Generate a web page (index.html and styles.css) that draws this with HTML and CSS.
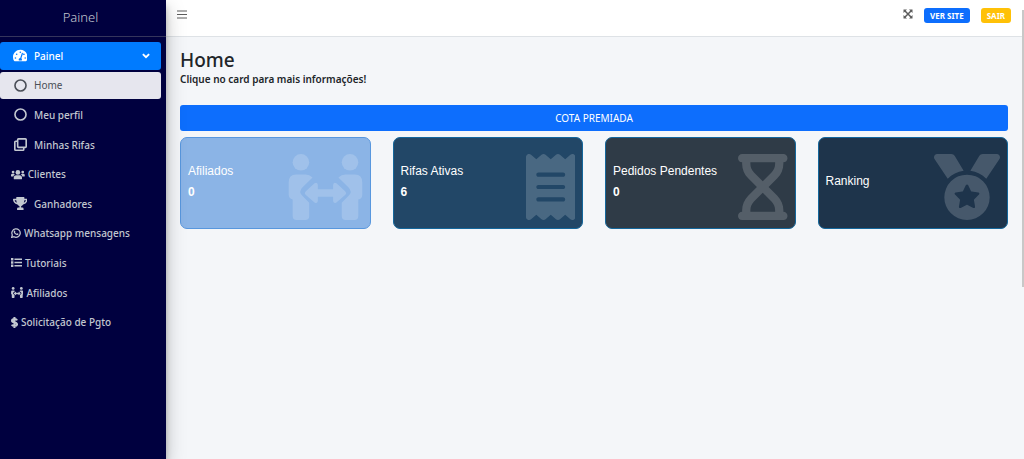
FILE: index.html
```html
<!DOCTYPE html>
<html lang="pt-BR">
<head>
<meta charset="utf-8">
<meta name="viewport" content="width=device-width, initial-scale=1">
<title>Painel</title>
<link rel="stylesheet" href="styles.css">
</head>
<body>
<div class="layout">
  <aside class="sidebar">
    <a class="brand" href="#">Painel</a>
    <nav class="menu" aria-label="Principal">
      <a class="item active" href="#">
        <span class="slot"><svg class="icon" viewBox="0 0 576 512"><path fill-rule="evenodd" d="M288 32C129 32 0 161 0 320c0 53 14 102 39 145 6 9 16 15 27 15h444c11 0 21-6 27-15 25-43 39-92 39-145C576 161 447 32 288 32zM288 96a32 32 0 1 1 0 64 32 32 0 1 1 0-64zM96 384a32 32 0 1 1 0-64 32 32 0 1 1 0 64zM144 240a32 32 0 1 1 0-64 32 32 0 1 1 0 64zM343 386c6 9 9 20 9 30 0 12-3 23-9 32H233c-6-9-9-20-9-32 0-34 27-62 61-64l61-184c4-13 18-20 30-15 13 4 20 18 15 30l-61 184zM402 224a32 32 0 1 1 28 16c-10 0-18-4-24-9zM480 384a32 32 0 1 1 0-64 32 32 0 1 1 0 64z"/></svg></span>
        Painel
        <svg class="chevron" viewBox="0 0 16 16"><path d="M3 5l5 5 5-5"/></svg>
      </a>
      <a class="item current" href="#"><span class="slot"><svg class="icon line" viewBox="0 0 16 16"><circle cx="8" cy="8" r="6.8"/></svg></span>Home</a>
      <a class="item" href="#"><span class="slot"><svg class="icon line" viewBox="0 0 16 16"><circle cx="8" cy="8" r="6.8"/></svg></span>Meu perfil</a>
      <a class="item" href="#"><span class="slot"><svg class="icon line" viewBox="0 0 16 16"><rect x="4.5" y="1" width="10.5" height="10.5" rx="1"/><path d="M4 4H2Q1 4 1 5v9q0 1 1 1h9q1 0 1-1v-2"/></svg></span>Minhas Rifas</a>
      <a class="item flush" href="#"><svg class="icon" viewBox="0 0 20 16"><circle cx="10" cy="5" r="3.4"/><circle cx="3" cy="4.5" r="2"/><circle cx="17" cy="4.5" r="2"/><path d="M4 14v-1.500q0-3.500 3.500-3.500h5q3.500 0 3.500 3.500V14q0 1-1 1H5q-1 0-1-1zM0 10V9q0-2 2-2h2q1 0 1.700.6Q3.800 8.800 3.500 11H1q-1 0-1-1zM20 10V9q0-2-2-2h-2q-1 0-1.700.6 1.900 1.200 2.200 3.400H19q1 0 1-1z"/></svg>Clientes</a>
      <a class="item" href="#"><span class="slot"><svg class="icon" viewBox="0 0 18 16"><path fill-rule="evenodd" d="M4.500 0h9q.5 0 .5.500V2h3.300q.7 0 .7.700 0 5-5.500 6.600-1 1.500-2.500 2V13h1.500q1.500 0 1.500 1.500V16H5v-1.500Q5 13 6.500 13H8v-1.700q-1.500-.5-2.500-2Q0 7.700 0 2.700 0 2 .7 2H4V.5q0-.5.500-.5zM2 4q.5 2 2.700 3Q4.200 5.800 4 4zM16 4h-2q-.2 1.800-.7 3Q15.500 6 16 4z"/></svg></span>Ganhadores</a>
      <a class="item flush" href="#"><svg class="icon small" viewBox="0 0 16 16"><path class="stroke" d="M1 15l1.100-3.800A6.700 6.700 0 1 1 4.800 14z"/><path d="M5.400 4q.7-.3 1 .3l.6 1.400q.1.400-.6 1.100 1 1.900 2.700 2.500.8-1 1-.9l1.600.8q.5.300.1 1.100-.8 1.400-2.600 1-3.800-1-5-4.500Q4 5 5.400 4z"/></svg>Whatsapp mensagens</a>
      <a class="item flush" href="#"><svg class="icon" viewBox="0 0 16 16"><path d="M0 1.500h3.500V5H0zM0 6.250h3.500v3.500H0zM0 11h3.500v3.500H0zM5 2.200h11v2.200H5zM5 6.900h11v2.200H5zM5 11.600h11v2.200H5z"/></svg>Tutoriais</a>
      <a class="item flush" href="#"><svg class="icon" viewBox="0 0 224 199"><use href="#people"/></svg>Afiliados</a>
      <a class="item flush" href="#"><svg class="icon" viewBox="0 0 10 16"><path class="stroke dollar" d="M5 0v16M8.800 4.800Q8 3 5.200 3 1.500 3 1.500 5.300q0 1.700 3.500 2.500 3.800.8 3.800 2.900Q8.800 13 5 13 2 13 1.200 11"/></svg>Solicitação de Pgto</a>
    </nav>
  </aside>

  <div class="page">
    <header class="topbar">
      <button class="icon-button" type="button" aria-label="Abrir menu"><svg class="burger" viewBox="0 0 10 9"><path d="M0 1h10M0 4.500h10M0 8h10"/></svg></button>
      <div class="actions">
        <button class="icon-button" type="button" aria-label="Tela cheia"><svg class="expand" viewBox="0 0 20 20"><path class="cross" d="M3 3l14 14M17 3L3 17"/><path d="M1 1h7L1 8zM19 1h-7l7 7zM1 19h7l-7-7zM19 19h-7l7-7z"/></svg></button>
        <a class="tag primary" href="#">VER SITE</a>
        <a class="tag warning" href="#">SAIR</a>
      </div>
    </header>

    <main class="content">
      <h1>Home</h1>
      <p class="hint">Clique no card para mais informações!</p>
      <button class="banner" type="button">COTA PREMIADA</button>
      <div class="cards">
        <a class="card affiliates" href="#">
          <span class="text">Afiliados<strong>0</strong></span>
          <svg class="art" viewBox="0 0 224 199"><g id="people"><circle cx="39" cy="25" r="25"/><circle cx="187" cy="25" r="25"/><path d="M24 62h29q12 0 21 9L44 100q-14 13 0 27l20 20v40q0 12-12 12H26q-12 0-12-12v-50Q2 134 2 121V86q0-24 22-24zM202 62h-29q-12 0-21 9l30 29q14 13 0 27l-20 20v40q0 12 12 12h26q12 0 12-12v-50q12-2 12-15V86q0-24-22-24z"/><path d="M53 113l27-25q8-5 10 5v13h46V93q2-10 10-5l27 25q5 5 0 10l-27 23q-8 5-10-4v-13H90v13q-2 9-10 4l-27-23q-5-5 0-10z"/></g></svg>
        </a>
        <a class="card active-raffles" href="#">
          <span class="text">Rifas Ativas<strong>6</strong></span>
          <svg class="art" viewBox="0 0 384 512"><path d="M14 2.200C22.500-1.700 32.500-.3 39.600 5.800L80 40.400 120.400 5.800c9-7.700 22.300-7.700 31.200 0L192 40.400 232.400 5.800c9-7.700 22.200-7.700 31.200 0L304 40.400 344.400 5.800c7.100-6.100 17.100-7.500 25.600-3.600s14 12.400 14 21.800V488c0 9.400-5.500 17.900-14 21.800s-18.500 2.500-25.600-3.600L304 471.600l-40.400 34.600c-9 7.700-22.200 7.700-31.200 0L192 471.600l-40.400 34.600c-9 7.700-22.300 7.700-31.200 0L80 471.600 39.600 506.200c-7.100 6.100-17.100 7.500-25.600 3.600S0 497.400 0 488V24C0 14.600 5.500 6.100 14 2.200zM96 144c-8.800 0-16 7.200-16 16s7.200 16 16 16H288c8.800 0 16-7.200 16-16s-7.200-16-16-16H96zM80 352c0 8.800 7.200 16 16 16H288c8.800 0 16-7.200 16-16s-7.200-16-16-16H96c-8.800 0-16 7.200-16 16zM96 240c-8.800 0-16 7.200-16 16s7.200 16 16 16H288c8.800 0 16-7.200 16-16s-7.200-16-16-16H96z"/></svg>
        </a>
        <a class="card pending" href="#">
          <span class="text">Pedidos Pendentes<strong>0</strong></span>
          <svg class="art" viewBox="0 0 384 512"><path d="M0 32C0 14.300 14.300 0 32 0H64 320h32c17.700 0 32 14.300 32 32s-14.300 32-32 32V75c0 42.400-16.900 83.100-46.900 113.100L237.300 256l67.900 67.900c30 30 46.900 70.700 46.900 113.100v11c17.700 0 32 14.300 32 32s-14.300 32-32 32H320 64 32c-17.700 0-32-14.300-32-32s14.300-32 32-32V437c0-42.400 16.900-83.100 46.900-113.100L146.700 256 78.900 188.100C48.900 158.100 32 117.400 32 75V64C14.300 64 0 49.700 0 32zM96 64V75c0 25.500 10.100 49.900 28.100 67.900L192 210.700l67.900-67.900c18-18 28.100-42.400 28.100-67.900V64H96zm0 384H288V437c0-25.500-10.100-49.900-28.100-67.900L192 301.300l-67.900 67.900c-18 18-28.100 42.400-28.100 67.900v11z"/></svg>
        </a>
        <a class="card ranking" href="#">
          <span class="text">Ranking</span>
          <svg class="art" viewBox="0 0 512 512"><path d="M4.100 38.200C1.400 34.200 0 29.400 0 24.600C0 11 11 0 24.600 0H133.900c11.200 0 21.700 5.900 27.400 15.500l68.500 114.100c-48.200 6.100-91.300 28.600-123.400 61.900L4.100 38.200zm503.700 0L405.600 191.500c-32.100-33.300-75.200-55.800-123.400-61.900L350.700 15.500C356.500 5.900 366.900 0 378.100 0H487.400C501 0 512 11 512 24.600c0 4.800-1.400 9.600-4.100 13.600zM80 336a176 176 0 1 1 352 0A176 176 0 1 1 80 336zm184.400-94.900c-3.400-7-13.300-7-16.800 0l-22.400 45.400c-1.400 2.800-4 4.700-7 5.100L168 298.900c-7.700 1.100-10.700 10.500-5.200 16l36.300 35.400c2.200 2.200 3.200 5.200 2.700 8.300l-8.600 49.900c-1.300 7.600 6.700 13.500 13.600 9.900l44.800-23.600c2.700-1.400 6-1.400 8.700 0l44.800 23.600c6.900 3.600 14.900-2.200 13.600-9.900l-8.600-49.900c-.5-3 .5-6.100 2.700-8.300l36.300-35.400c5.600-5.400 2.500-14.800-5.200-16l-50.100-7.300c-3-.4-5.700-2.400-7-5.100l-22.400-45.400z"/></svg>
        </a>
      </div>
    </main>
  </div>
</div>
<div class="scroll-thumb"></div>
</body>
</html>
```
FILE: styles.css
```css
* { box-sizing: border-box; }
body {
  margin: 0;
  background: #f4f6f9;
  color: #212529;
  font-family: "Noto Sans", "Open Sans", sans-serif;
  font-size: 10px;
}
a { color: inherit; text-decoration: none; }
button { border: 0; font: inherit; cursor: pointer; }
svg { display: block; flex: none; fill: currentColor; }

.layout { display: flex; min-height: 100vh; }

.sidebar {
  position: relative;
  z-index: 1;
  flex: 0 0 166px;
  background: #00003f;
  color: #c2c7d0;
  box-shadow: 0 8px 18px rgba(0, 0, 0, .25), 0 6px 6px rgba(0, 0, 0, .2);
}
.brand {
  display: block;
  height: 37px;
  padding-right: 5px;
  border-bottom: 1px solid #35355c;
  font-size: 13px;
  font-weight: 300;
  line-height: 35px;
  text-align: center;
}
.menu {
  display: grid;
  grid-auto-rows: 1fr;
  gap: 2px;
  min-height: 294px;
  padding-right: 5px;
  margin-top: 5px;
  font-weight: 500;
}
.item {
  display: flex;
  align-items: center;
  padding: 0 10px;
  border-radius: 3px;
}
.item.active { background: #007bff; color: #fff; }
.item.current { background: #e6e6ee; color: #4b4f58; font-weight: 400; }
.slot { display: flex; justify-content: center; width: 20px; margin-right: 4px; }
.icon { height: 13px; }
.flush { gap: 3px; padding-left: 11px; }
.flush .icon { height: 11px; }
.flush .small { height: 10px; }
.line, .stroke { fill: none; stroke: currentColor; stroke-width: 2; }
.stroke.dollar { stroke-width: 3; }
.chevron { width: 10px; margin-left: auto; fill: none; stroke: currentColor; stroke-width: 3; }

.page { flex: 1; min-width: 0; }
.topbar {
  display: flex;
  justify-content: space-between;
  height: 37px;
  padding: 6px 13px 0 11px;
  border-bottom: 1px solid #dee2e6;
  background: #fff;
}
.actions { display: flex; gap: 11px; }
.icon-button {
  display: flex;
  align-items: center;
  height: 16px;
  padding: 0;
  background: none;
  color: #5c5c5c;
}
.burger { width: 10px; stroke: currentColor; stroke-width: 1; }
.expand { width: 10px; }
.cross { fill: none; stroke: currentColor; stroke-width: 3; }
.tag {
  height: 15px;
  margin-top: 2px;
  padding: 0 6px;
  border-radius: 3px;
  color: #fff;
  font-size: 8px;
  font-weight: 700;
  line-height: 15px;
}
.primary { background: #0d6efd; }
.warning { background: #ffc107; }

.content { padding: 11px 16px 16px 14px; }
h1 { margin: 0; font-size: 19px; font-weight: 500; line-height: 24px; }
.hint { margin: 0; font-weight: 600; line-height: 14px; }
.banner {
  display: block;
  width: 100%;
  height: 26px;
  margin: 19px 0 6px;
  border-radius: 3px;
  background: #0d6efd;
  color: #fff;
}
.cards { display: grid; grid-template-columns: repeat(4, 1fr); gap: 22px; }
.card {
  display: flex;
  align-items: center;
  justify-content: space-between;
  min-height: 92px;
  padding: 8px 7px 0;
  border: 1px solid #14679c;
  border-radius: 7px;
  color: #fff;
  font-family: "Liberation Sans", sans-serif;
  font-size: 12px;
}
.text { padding-bottom: 11px; line-height: 21px; white-space: nowrap; }
.text strong { display: block; }
.art { height: 66px; fill: rgba(255, 255, 255, .18); }
.affiliates { background: #8bb4e6; border-color: #5897de; }
.active-raffles { background: #224767; }
.pending { background: #2f3b47; }
.ranking { background: #1e344b; }

.scroll-thumb {
  position: absolute;
  top: 10px;
  right: 0;
  z-index: 2;
  width: 2px;
  height: 277px;
  background: #c8c8c8;
}
```
